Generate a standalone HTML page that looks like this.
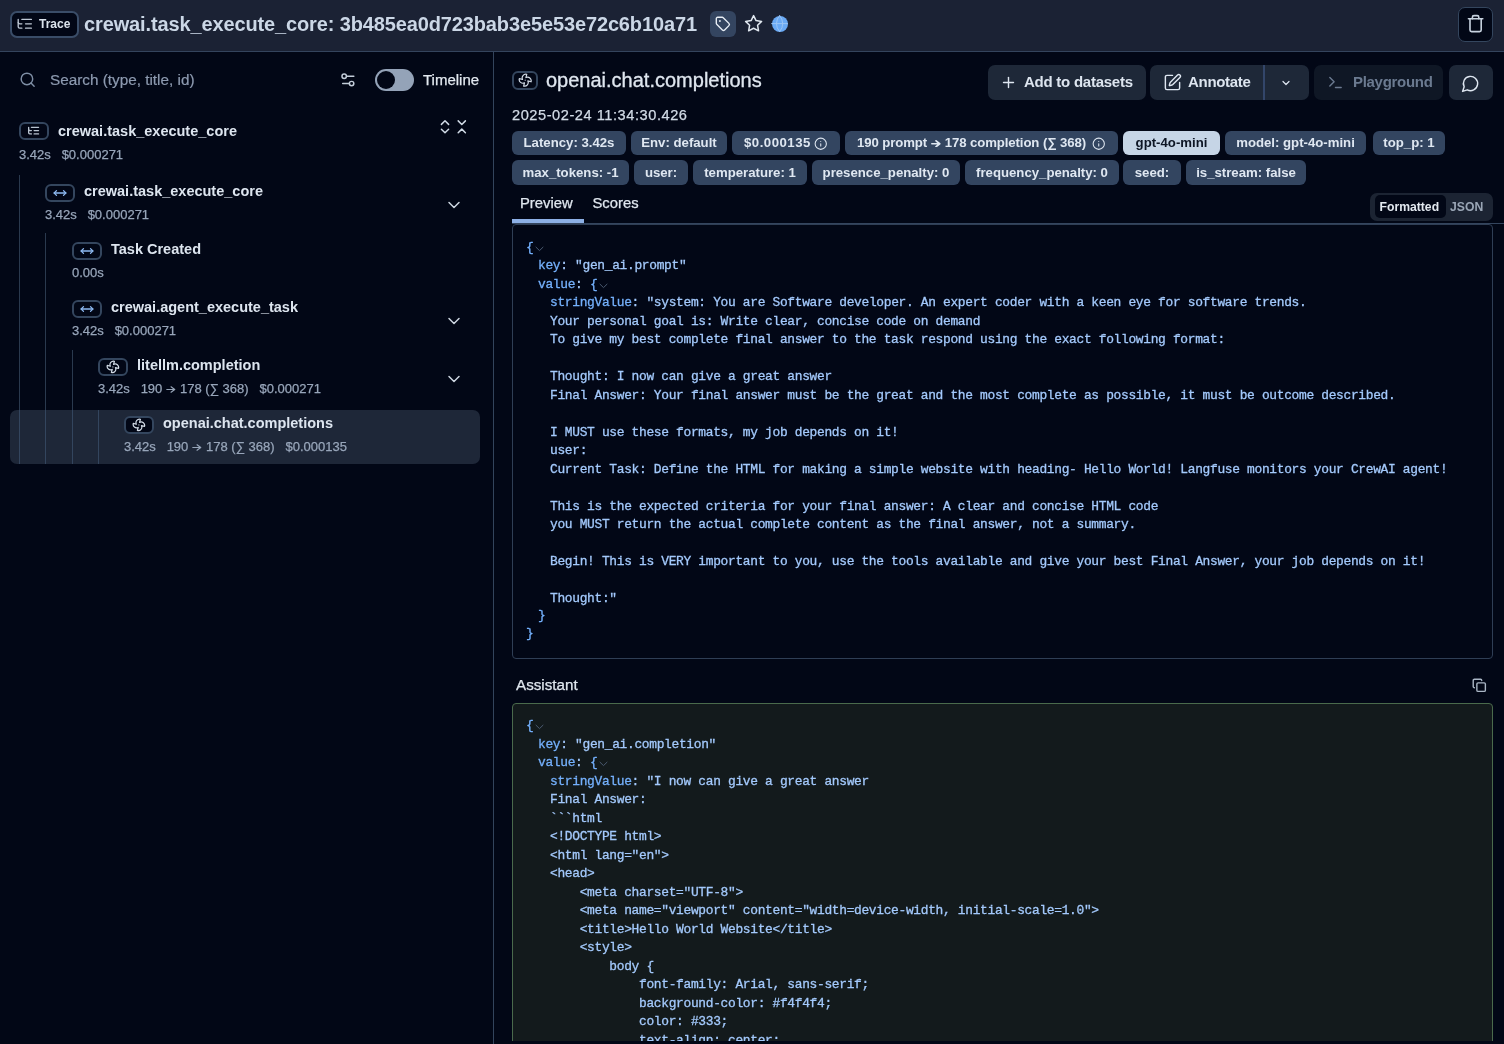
<!DOCTYPE html>
<html><head><meta charset="utf-8">
<style>
*{box-sizing:border-box;margin:0;padding:0}
html,body{width:1504px;height:1044px;overflow:hidden;background:#020716;font-family:"Liberation Sans",sans-serif;color:#e2e8f0}
.a{position:absolute}
.t{position:absolute;white-space:nowrap}
.treename{font-size:14.5px;font-weight:bold;color:#dde5ef}
.meta{font-size:13px;color:#98a6ba;-webkit-text-stroke:0.25px currentColor}
.ibox{position:absolute;width:30px;height:18px;border:2px solid #34465e;border-radius:6px}
.vline{position:absolute;width:1px;background:#2a394e}
.badge{position:absolute;height:24px;border-radius:6px;background:#334560;color:#dfe7f1;font-size:13.2px;font-weight:bold;white-space:nowrap;line-height:24px;text-align:center}
.btn{position:absolute;height:35px;border-radius:7px;background:#1e2838}
.code{position:absolute;font-family:"Liberation Mono",monospace;font-size:12.9px;letter-spacing:-0.32px;line-height:18.45px;-webkit-text-stroke:0.3px currentColor}
.ln{height:18.45px;white-space:pre}
.k{color:#74b0fc}
.s{color:#a3c9fc}
.chev{color:#4f5f75;font-size:11px}
</style></head><body>
<div id="root" style="position:absolute;left:0;top:0;width:1504px;height:1044px;will-change:transform">
<div class="a" style="left:0;top:0;width:1504px;height:51px;background:#1b2234"></div>
<div class="a" style="left:0;top:51px;width:1504px;height:1px;background:#34445d"></div>
<div class="a" style="left:10px;top:11px;width:69px;height:27px;border:2px solid #3a4d68;border-radius:7px;background:#020716"></div>
<svg class="a" style="left:16.4px;top:15px" width="17.6" height="17.6" viewBox="0 0 24 24" fill="none" stroke="#bfc9d6" stroke-width="1.8" stroke-linecap="round" stroke-linejoin="round" ><path d="M21 12h-8"/><path d="M21 6H8"/><path d="M21 18h-8"/><path d="M3 6v4c0 1.1.9 2 2 2h3"/><path d="M3 10v6c0 1.1.9 2 2 2h3"/></svg>
<div class="t" style="left:39px;top:17px;font-size:12px;font-weight:bold;color:#dbe3ec">Trace</div>
<div class="t" id="title" style="left:84px;top:13px;font-size:20px;font-weight:bold;letter-spacing:-0.13px;color:#cbd7e6">crewai.task_execute_core: 3b485ea0d723bab3e5e53e72c6b10a71</div>
<div class="a" style="left:710px;top:11px;width:26px;height:26px;border-radius:6px;background:#344560"></div>
<svg class="a" style="left:714.9px;top:15.9px" width="15.7" height="15.7" viewBox="0 0 24 24" fill="none" stroke="#e8eef5" stroke-width="2.1" stroke-linecap="round" stroke-linejoin="round" color="#e8eef5"><path d="M12.586 2.586A2 2 0 0 0 11.172 2H4a2 2 0 0 0-2 2v7.172a2 2 0 0 0 .586 1.414l8.704 8.704a2.426 2.426 0 0 0 3.42 0l6.58-6.58a2.426 2.426 0 0 0 0-3.42z"/><circle cx="7.5" cy="7.5" r=".5" fill="currentColor"/></svg>
<svg class="a" style="left:744.4px;top:13.9px" width="19.2" height="19.2" viewBox="0 0 24 24" fill="none" stroke="#e1e8f0" stroke-width="1.9" stroke-linecap="round" stroke-linejoin="round" ><polygon points="12 2 15.09 8.26 22 9.27 17 14.14 18.18 21.02 12 17.77 5.82 21.02 7 14.14 2 9.27 8.91 8.26 12 2"/></svg>
<div class="a" style="left:772px;top:16px;width:16px;height:16px;border-radius:50%;background:#6aaaf5"></div>
<svg class="a" style="left:770.4px;top:14.4px" width="19.2" height="19.2" viewBox="0 0 24 24" fill="none" stroke="#9cc5f5" stroke-width="1.2" stroke-linecap="round" stroke-linejoin="round" ><path d="M12 2a14.5 14.5 0 0 0 0 20 14.5 14.5 0 0 0 0-20"/><path d="M2 12h20"/></svg>
<div class="a" style="left:1458px;top:7px;width:35px;height:35px;border-radius:7px;border:1px solid #34465e;background:#020716"></div>
<svg class="a" style="left:1466.3px;top:13.9px" width="19.2" height="19.2" viewBox="0 0 24 24" fill="none" stroke="#c8d3e0" stroke-width="2" stroke-linecap="round" stroke-linejoin="round" ><path d="M3 6h18"/><path d="M19 6v14c0 1-1 2-2 2H7c-1 0-2-1-2-2V6"/><path d="M8 6V4c0-1 1-2 2-2h4c1 0 2 1 2 2v2"/></svg>
<div class="a" style="left:493px;top:52px;width:1px;height:992px;background:#33445c"></div>
<svg class="a" style="left:19.3px;top:71.3px" width="17.3" height="17.3" viewBox="0 0 24 24" fill="none" stroke="#7f8fa6" stroke-width="2" stroke-linecap="round" stroke-linejoin="round" ><circle cx="11" cy="11" r="8"/><path d="m21 21-4.3-4.3"/></svg>
<div class="t" style="left:50px;top:71px;font-size:15.3px;color:#8d9ab0;-webkit-text-stroke:0.2px currentColor">Search (type, title, id)</div>
<svg class="a" style="left:338.8px;top:70.8px" width="17.8" height="17.8" viewBox="0 0 24 24" fill="none" stroke="#c3cdd9" stroke-width="2" stroke-linecap="round" stroke-linejoin="round" ><path d="M20 7h-9"/><path d="M14 17H5"/><circle cx="17" cy="17" r="3"/><circle cx="7" cy="7" r="3"/></svg>
<div class="a" style="left:375px;top:69px;width:39px;height:22px;border-radius:11px;background:#94a3b8"></div>
<div class="a" style="left:376.5px;top:71px;width:18px;height:18px;border-radius:50%;background:#020716"></div>
<div class="t" style="left:423px;top:71px;font-size:15px;color:#e3e9f0;-webkit-text-stroke:0.25px currentColor">Timeline</div>
<svg class="a" style="left:0;top:0" width="1504" height="1044" viewBox="0 0 1504 1044" fill="none" stroke="#d0dae6" stroke-width="1.5" stroke-linecap="round" stroke-linejoin="round"><path d="M441.4 124.4L445 120.8L448.6 124.4M441.4 129.2L445 132.8L448.6 129.2M458.2 120.9L461.8 124.5L465.4 120.9M458.2 132.7L461.8 129.1L465.4 132.7"/></svg>
<div class="vline" style="left:19px;top:175px;height:235px"></div>
<div class="vline" style="left:45px;top:233px;height:177px"></div>
<div class="vline" style="left:72px;top:350px;height:60px"></div>
<div class="ibox" style="left:19px;top:122px"></div>
<svg class="a" style="left:27.4px;top:124.4px" width="13.2" height="13.2" viewBox="0 0 24 24" fill="none" stroke="#b9c4d1" stroke-width="2.4" stroke-linecap="round" stroke-linejoin="round" ><path d="M21 12h-8"/><path d="M21 6H8"/><path d="M21 18h-8"/><path d="M3 6v4c0 1.1.9 2 2 2h3"/><path d="M3 10v6c0 1.1.9 2 2 2h3"/></svg>
<div class="t treename" style="left:58px;top:122.5px">crewai.task_execute_core</div>
<div class="t meta" style="left:19px;top:147px">3.42s&nbsp;&nbsp;&nbsp;$0.000271</div>
<div class="ibox" style="left:45px;top:184px"></div>
<svg class="a" style="left:53px;top:186px" width="14" height="14" viewBox="0 0 24 24" fill="none" stroke="#8dbaf2" stroke-width="2.2" stroke-linecap="round" stroke-linejoin="round" ><polyline points="18 8 22 12 18 16"/><polyline points="6 8 2 12 6 16"/><line x1="2" x2="22" y1="12" y2="12"/></svg>
<div class="t treename" style="left:84px;top:182.5px">crewai.task_execute_core</div>
<div class="t meta" style="left:45px;top:207px">3.42s&nbsp;&nbsp;&nbsp;$0.000271</div>
<svg class="a" style="left:444px;top:194.5px" width="20" height="20" viewBox="0 0 24 24" fill="none" stroke="#cdd6e1" stroke-width="1.8" stroke-linecap="round" stroke-linejoin="round" ><path d="m6 9 6 6 6-6"/></svg>
<div class="ibox" style="left:72px;top:242px"></div>
<svg class="a" style="left:80px;top:244px" width="14" height="14" viewBox="0 0 24 24" fill="none" stroke="#8dbaf2" stroke-width="2.2" stroke-linecap="round" stroke-linejoin="round" ><polyline points="18 8 22 12 18 16"/><polyline points="6 8 2 12 6 16"/><line x1="2" x2="22" y1="12" y2="12"/></svg>
<div class="t treename" style="left:111px;top:240.5px">Task Created</div>
<div class="t meta" style="left:72px;top:265px">0.00s</div>
<div class="ibox" style="left:72px;top:300px"></div>
<svg class="a" style="left:80px;top:302px" width="14" height="14" viewBox="0 0 24 24" fill="none" stroke="#8dbaf2" stroke-width="2.2" stroke-linecap="round" stroke-linejoin="round" ><polyline points="18 8 22 12 18 16"/><polyline points="6 8 2 12 6 16"/><line x1="2" x2="22" y1="12" y2="12"/></svg>
<div class="t treename" style="left:111px;top:298.5px">crewai.agent_execute_task</div>
<div class="t meta" style="left:72px;top:323px">3.42s&nbsp;&nbsp;&nbsp;$0.000271</div>
<svg class="a" style="left:444px;top:310.5px" width="20" height="20" viewBox="0 0 24 24" fill="none" stroke="#cdd6e1" stroke-width="1.8" stroke-linecap="round" stroke-linejoin="round" ><path d="m6 9 6 6 6-6"/></svg>
<div class="ibox" style="left:98px;top:358px"></div>
<svg class="a" style="left:106.1px;top:360.1px" width="13.8" height="13.8" viewBox="0 0 24 24" fill="none" stroke="#d3dce7" stroke-width="2.1" stroke-linecap="round" stroke-linejoin="round" ><path d="M10.827 16.379a6.082 6.082 0 0 1-8.618-7.002l5.412 1.45a6.082 6.082 0 0 1 7.002-8.618l-1.45 5.412a6.082 6.082 0 0 1 8.618 7.002l-5.412-1.45a6.082 6.082 0 0 1-7.002 8.618l1.45-5.412Z"/><path d="M12 12v.01"/></svg>
<div class="t treename" style="left:137px;top:356.5px">litellm.completion</div>
<div class="t meta" style="left:98px;top:381px">3.42s&nbsp;&nbsp;&nbsp;190 <svg width="9.5" height="7" viewBox="0 0 9.5 7" style="vertical-align:0px;margin:0 0.5px" fill="none" stroke="currentColor" stroke-width="1.2" stroke-linecap="round" stroke-linejoin="round"><path d="M0.8 3.5H8.7M5.05 0.8L8.7 3.5L5.05 6.2"/></svg> 178 (∑ 368)&nbsp;&nbsp;&nbsp;$0.000271</div>
<svg class="a" style="left:444px;top:368.5px" width="20" height="20" viewBox="0 0 24 24" fill="none" stroke="#cdd6e1" stroke-width="1.8" stroke-linecap="round" stroke-linejoin="round" ><path d="m6 9 6 6 6-6"/></svg>
<div class="a" style="left:10px;top:410px;width:470px;height:54px;border-radius:7px;background:#1e2738"></div>
<div class="vline" style="left:19px;top:410px;height:54px;background:#33455e"></div>
<div class="vline" style="left:45px;top:410px;height:54px;background:#33455e"></div>
<div class="vline" style="left:72px;top:410px;height:54px;background:#33455e"></div>
<div class="vline" style="left:98px;top:410px;height:54px;background:#33455e"></div>
<div class="ibox" style="left:124px;top:416px;background:#020716"></div>
<svg class="a" style="left:132.1px;top:418.1px" width="13.8" height="13.8" viewBox="0 0 24 24" fill="none" stroke="#d3dce7" stroke-width="2.1" stroke-linecap="round" stroke-linejoin="round" ><path d="M10.827 16.379a6.082 6.082 0 0 1-8.618-7.002l5.412 1.45a6.082 6.082 0 0 1 7.002-8.618l-1.45 5.412a6.082 6.082 0 0 1 8.618 7.002l-5.412-1.45a6.082 6.082 0 0 1-7.002 8.618l1.45-5.412Z"/><path d="M12 12v.01"/></svg>
<div class="t treename" style="left:163px;top:414.5px">openai.chat.completions</div>
<div class="t meta" style="left:124px;top:439px">3.42s&nbsp;&nbsp;&nbsp;190 <svg width="9.5" height="7" viewBox="0 0 9.5 7" style="vertical-align:0px;margin:0 0.5px" fill="none" stroke="currentColor" stroke-width="1.2" stroke-linecap="round" stroke-linejoin="round"><path d="M0.8 3.5H8.7M5.05 0.8L8.7 3.5L5.05 6.2"/></svg> 178 (∑ 368)&nbsp;&nbsp;&nbsp;$0.000135</div>
<div class="ibox" style="left:512px;top:71px;width:26px;height:18.5px"></div>
<svg class="a" style="left:517.8px;top:73.3px" width="14.4" height="14.4" viewBox="0 0 24 24" fill="none" stroke="#d3dce7" stroke-width="2" stroke-linecap="round" stroke-linejoin="round" ><path d="M10.827 16.379a6.082 6.082 0 0 1-8.618-7.002l5.412 1.45a6.082 6.082 0 0 1 7.002-8.618l-1.45 5.412a6.082 6.082 0 0 1 8.618 7.002l-5.412-1.45a6.082 6.082 0 0 1-7.002 8.618l1.45-5.412Z"/><path d="M12 12v.01"/></svg>
<div class="t" id="rtitle" style="left:546px;top:69px;font-size:20px;color:#dfe6ef;-webkit-text-stroke:0.3px #dfe6ef">openai.chat.completions</div>
<div class="t" id="date" style="left:512px;top:107px;font-size:14.6px;letter-spacing:0.55px;color:#d2dbe6;-webkit-text-stroke:0.25px currentColor">2025-02-24 11:34:30.426</div>
<div class="btn" style="left:988px;top:65px;width:158px"></div>
<svg class="a" style="left:999.5px;top:73.5px" width="17" height="17" viewBox="0 0 24 24" fill="none" stroke="#dfe7f1" stroke-width="2" stroke-linecap="round" stroke-linejoin="round" ><path d="M5 12h14"/><path d="M12 5v14"/></svg>
<div class="t" style="left:1024px;top:73px;font-size:15px;font-weight:bold;letter-spacing:-0.25px;color:#dde5ef">Add to datasets</div>
<div class="btn" style="left:1150px;top:65px;width:159px"></div>
<div class="a" style="left:1263px;top:65px;width:2px;height:35px;background:#33466a"></div>
<svg class="a" style="left:1162.5px;top:73px" width="19" height="19" viewBox="0 0 24 24" fill="none" stroke="#dfe7f1" stroke-width="1.8" stroke-linecap="round" stroke-linejoin="round" ><path d="M12 3H5a2 2 0 0 0-2 2v14a2 2 0 0 0 2 2h14a2 2 0 0 0 2-2v-7"/><path d="M18.375 2.625a1 1 0 0 1 3 3l-9.013 9.014a2 2 0 0 1-.853.505l-2.873.84a.5.5 0 0 1-.62-.62l.84-2.873a2 2 0 0 1 .506-.852z"/></svg>
<div class="t" style="left:1188px;top:73px;font-size:15px;font-weight:bold;letter-spacing:-0.3px;color:#dde5ef">Annotate</div>
<svg class="a" style="left:1279.5px;top:76.5px" width="12" height="12" viewBox="0 0 24 24" fill="none" stroke="#dfe7f1" stroke-width="2.4" stroke-linecap="round" stroke-linejoin="round" ><path d="m6 9 6 6 6-6"/></svg>
<div class="a" style="left:1314px;top:65px;width:129px;height:35px;border-radius:7px;background:#0f1725"></div>
<svg class="a" style="left:1326.5px;top:74px" width="17" height="17" viewBox="0 0 24 24" fill="none" stroke="#6b7a90" stroke-width="2" stroke-linecap="round" stroke-linejoin="round" ><polyline points="4 17 10 11 4 5"/><line x1="12" x2="20" y1="19" y2="19"/></svg>
<div class="t" style="left:1353px;top:73px;font-size:15px;font-weight:bold;letter-spacing:-0.3px;color:#6b7a90">Playground</div>
<div class="btn" style="left:1449px;top:65px;width:44px"></div>
<svg class="a" style="left:1460.5px;top:73.5px" width="19" height="19" viewBox="0 0 24 24" fill="none" stroke="#dfe7f1" stroke-width="1.8" stroke-linecap="round" stroke-linejoin="round" ><path d="M7.9 20A9 9 0 1 0 4 16.1L2 22Z"/></svg>
<div class="badge" style="left:512px;top:131px;width:114px;letter-spacing:0px">Latency: 3.42s</div>
<div class="badge" style="left:631px;top:131px;width:96px;letter-spacing:0px">Env: default</div>
<div class="badge" style="left:732px;top:131px;width:108px;letter-spacing:0.5px;text-align:left;padding-left:12px">$0.000135</div>
<svg class="a" style="left:814px;top:136.5px" width="13.5" height="13.5" viewBox="0 0 24 24" fill="none" stroke="#dfe7f1" stroke-width="1.9" stroke-linecap="round" stroke-linejoin="round" ><circle cx="12" cy="12" r="10"/><path d="M12 16v-4"/><path d="M12 8h.01"/></svg>
<div class="badge" style="left:845px;top:131px;width:273px;letter-spacing:-0.1px;text-align:left;padding-left:12px">190 prompt <svg width="9.5" height="7.5" viewBox="0 0 9.5 7.5" style="vertical-align:0px;margin:0 0.5px" fill="none" stroke="currentColor" stroke-width="1.7" stroke-linecap="round" stroke-linejoin="round"><path d="M0.8 3.75H8.7M5.05 0.8L8.7 3.75L5.05 6.7"/></svg> 178 completion (∑ 368)</div>
<svg class="a" style="left:1092px;top:136.5px" width="13.5" height="13.5" viewBox="0 0 24 24" fill="none" stroke="#dfe7f1" stroke-width="1.9" stroke-linecap="round" stroke-linejoin="round" ><circle cx="12" cy="12" r="10"/><path d="M12 16v-4"/><path d="M12 8h.01"/></svg>
<div class="badge" style="left:1123px;top:131px;width:97px;letter-spacing:0px;background:#c6d5e6;color:#0d1524">gpt-4o-mini</div>
<div class="badge" style="left:1225px;top:131px;width:141px;letter-spacing:0px">model: gpt-4o-mini</div>
<div class="badge" style="left:1373px;top:131px;width:72px;letter-spacing:0px">top_p: 1</div>
<div class="badge" style="left:512px;top:160px;width:117px;letter-spacing:0px;height:25px;line-height:25px">max_tokens: -1</div>
<div class="badge" style="left:634px;top:160px;width:54px;letter-spacing:0px;height:25px;line-height:25px">user:</div>
<div class="badge" style="left:693px;top:160px;width:114px;letter-spacing:0px;height:25px;line-height:25px">temperature: 1</div>
<div class="badge" style="left:812px;top:160px;width:148px;letter-spacing:0px;height:25px;line-height:25px">presence_penalty: 0</div>
<div class="badge" style="left:965px;top:160px;width:154px;letter-spacing:0px;height:25px;line-height:25px">frequency_penalty: 0</div>
<div class="badge" style="left:1123px;top:160px;width:58px;letter-spacing:0px;height:25px;line-height:25px">seed:</div>
<div class="badge" style="left:1186px;top:160px;width:120px;letter-spacing:0px;height:25px;line-height:25px">is_stream: false</div>
<div class="t" style="left:520px;top:195px;font-size:14.8px;color:#e0e7ef;-webkit-text-stroke:0.25px #e0e7ef">Preview</div>
<div class="t" style="left:592.5px;top:195px;font-size:14.8px;color:#e0e7ef;-webkit-text-stroke:0.25px #e0e7ef">Scores</div>
<div class="a" style="left:1370px;top:193px;width:123px;height:28px;border-radius:7px;background:#1c2433"></div>
<div class="a" style="left:1375px;top:195px;width:71px;height:23px;border-radius:5px;background:#020716"></div>
<div class="t" style="left:1379.5px;top:200px;font-size:12.2px;font-weight:bold;color:#e3e9f0">Formatted</div>
<div class="t" style="left:1450px;top:200px;font-size:12.2px;font-weight:bold;color:#9aa6b6">JSON</div>
<div class="a" style="left:512px;top:224px;width:981px;height:435px;border:1px solid #2f3e55;border-radius:4px;background:#020716"></div>
<div class="a" style="left:512px;top:223px;width:992px;height:1px;background:#34455e"></div>
<div class="a" style="left:512px;top:219px;width:72px;height:4px;background:#8db0e6"></div>
<div class="code" id="code1" style="left:526px;top:239px;line-height:18.47px"><div class="ln" style="padding-left:0px;height:18.47px"><span class="k">{</span><svg width="9" height="6" viewBox="0 0 9 6" style="vertical-align:-1px;margin-left:2px" fill="none" stroke="#4a5a70" stroke-width="1" stroke-linecap="round"><path d="M1 1.2L4.5 4.6 8 1.2"/></svg></div><div class="ln" style="padding-left:12px;height:18.47px"><span class="k">key</span><span class="s">: "gen_ai.prompt"</span></div><div class="ln" style="padding-left:12px;height:18.47px"><span class="k">value</span><span class="s">: </span><span class="k">{</span><svg width="9" height="6" viewBox="0 0 9 6" style="vertical-align:-1px;margin-left:2px" fill="none" stroke="#4a5a70" stroke-width="1" stroke-linecap="round"><path d="M1 1.2L4.5 4.6 8 1.2"/></svg></div><div class="ln" style="padding-left:24px;height:18.47px"><span class="k">stringValue</span><span class="s">: "system: You are Software developer. An expert coder with a keen eye for software trends.</span></div><div class="ln" style="padding-left:24px;height:18.47px"><span class="s">Your personal goal is: Write clear, concise code on demand</span></div><div class="ln" style="padding-left:24px;height:18.47px"><span class="s">To give my best complete final answer to the task respond using the exact following format:</span></div><div class="ln" style="padding-left:24px;height:18.47px"><span class="s"></span></div><div class="ln" style="padding-left:24px;height:18.47px"><span class="s">Thought: I now can give a great answer</span></div><div class="ln" style="padding-left:24px;height:18.47px"><span class="s">Final Answer: Your final answer must be the great and the most complete as possible, it must be outcome described.</span></div><div class="ln" style="padding-left:24px;height:18.47px"><span class="s"></span></div><div class="ln" style="padding-left:24px;height:18.47px"><span class="s">I MUST use these formats, my job depends on it!</span></div><div class="ln" style="padding-left:24px;height:18.47px"><span class="s">user:</span></div><div class="ln" style="padding-left:24px;height:18.47px"><span class="s">Current Task: Define the HTML for making a simple website with heading- Hello World! Langfuse monitors your CrewAI agent!</span></div><div class="ln" style="padding-left:24px;height:18.47px"><span class="s"></span></div><div class="ln" style="padding-left:24px;height:18.47px"><span class="s">This is the expected criteria for your final answer: A clear and concise HTML code</span></div><div class="ln" style="padding-left:24px;height:18.47px"><span class="s">you MUST return the actual complete content as the final answer, not a summary.</span></div><div class="ln" style="padding-left:24px;height:18.47px"><span class="s"></span></div><div class="ln" style="padding-left:24px;height:18.47px"><span class="s">Begin! This is VERY important to you, use the tools available and give your best Final Answer, your job depends on it!</span></div><div class="ln" style="padding-left:24px;height:18.47px"><span class="s"></span></div><div class="ln" style="padding-left:24px;height:18.47px"><span class="s">Thought:"</span></div><div class="ln" style="padding-left:12px;height:18.47px"><span class="k" style="position:relative;top:-1px">}</span></div><div class="ln" style="padding-left:0px;height:18.47px"><span class="k" style="position:relative;top:-1.5px">}</span></div></div>
<div class="t" style="left:516px;top:675.5px;font-size:15.2px;color:#e0e7ef;-webkit-text-stroke:0.25px #e0e7ef">Assistant</div>
<svg class="a" style="left:1472.3px;top:678.3px" width="14.6" height="14.6" viewBox="0 0 24 24" fill="none" stroke="#aab6c5" stroke-width="2.3" stroke-linecap="round" stroke-linejoin="round" ><rect width="14" height="14" x="8" y="8" rx="2" ry="2"/><path d="M4 16c-1.1 0-2-.9-2-2V4c0-1.1.9-2 2-2h10c1.1 0 2 .9 2 2"/></svg>
<div class="a" style="left:512px;top:703px;width:981px;height:400px;border:1px solid #4a6a4c;border-radius:4px;background:#131a1c"></div>
<div class="code" id="code2" style="left:526px;top:717px;line-height:18.5px"><div class="ln" style="padding-left:0px;height:18.5px"><span class="k">{</span><svg width="9" height="6" viewBox="0 0 9 6" style="vertical-align:-1px;margin-left:2px" fill="none" stroke="#4a5a70" stroke-width="1" stroke-linecap="round"><path d="M1 1.2L4.5 4.6 8 1.2"/></svg></div><div class="ln" style="padding-left:12px;height:18.5px"><span class="k">key</span><span class="s">: "gen_ai.completion"</span></div><div class="ln" style="padding-left:12px;height:18.5px"><span class="k">value</span><span class="s">: </span><span class="k">{</span><svg width="9" height="6" viewBox="0 0 9 6" style="vertical-align:-1px;margin-left:2px" fill="none" stroke="#4a5a70" stroke-width="1" stroke-linecap="round"><path d="M1 1.2L4.5 4.6 8 1.2"/></svg></div><div class="ln" style="padding-left:24px;height:18.5px"><span class="k">stringValue</span><span class="s">: "I now can give a great answer</span></div><div class="ln" style="padding-left:24px;height:18.5px"><span class="s">Final Answer:</span></div><div class="ln" style="padding-left:24px;height:18.5px"><span class="s">```html</span></div><div class="ln" style="padding-left:24px;height:18.5px"><span class="s">&lt;!DOCTYPE html&gt;</span></div><div class="ln" style="padding-left:24px;height:18.5px"><span class="s">&lt;html lang="en"&gt;</span></div><div class="ln" style="padding-left:24px;height:18.5px"><span class="s">&lt;head&gt;</span></div><div class="ln" style="padding-left:24px;height:18.5px"><span class="s">    &lt;meta charset="UTF-8"&gt;</span></div><div class="ln" style="padding-left:24px;height:18.5px"><span class="s">    &lt;meta name="viewport" content="width=device-width, initial-scale=1.0"&gt;</span></div><div class="ln" style="padding-left:24px;height:18.5px"><span class="s">    &lt;title&gt;Hello World Website&lt;/title&gt;</span></div><div class="ln" style="padding-left:24px;height:18.5px"><span class="s">    &lt;style&gt;</span></div><div class="ln" style="padding-left:24px;height:18.5px"><span class="s">        body {</span></div><div class="ln" style="padding-left:24px;height:18.5px"><span class="s">            font-family: Arial, sans-serif;</span></div><div class="ln" style="padding-left:24px;height:18.5px"><span class="s">            background-color: #f4f4f4;</span></div><div class="ln" style="padding-left:24px;height:18.5px"><span class="s">            color: #333;</span></div><div class="ln" style="padding-left:24px;height:18.5px"><span class="s">            text-align: center;</span></div></div>
<div class="a" style="left:494px;top:1041px;width:1010px;height:3px;background:#020716;z-index:5"></div>
</div></body></html>
